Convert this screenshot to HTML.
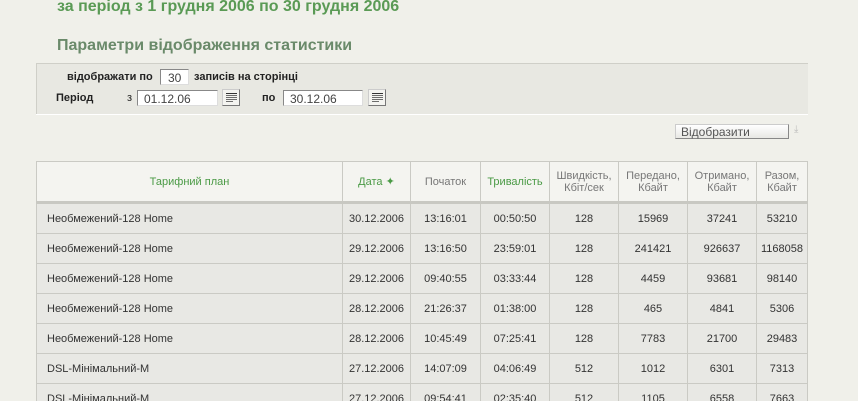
<!DOCTYPE html>
<html><head><meta charset="utf-8"><style>
html,body{margin:0;width:858px;height:401px;overflow:hidden}
body{background:#f0f0ea;font-family:"Liberation Sans",sans-serif;position:relative}
.t1{position:absolute;left:57px;top:-2px;font-size:16px;font-weight:bold;color:#5a9a55}
.t2{position:absolute;left:57px;top:37px;font-size:16px;font-weight:bold;color:#6a8a6a}
.panel{position:absolute;left:36px;top:63px;width:771px;height:50px;background:#e8e8e2;border-top:1px solid #cfcfc8;border-left:1px solid #cfcfc8;box-shadow:0 1px 0 #fff}
.lbl{position:absolute;font-size:11px;font-weight:bold;color:#222}
.inp{position:absolute;height:16px;background:#fff;border:1px solid #888;border-right-color:#ddd;border-bottom-color:#ddd;font-size:12px;color:#444;line-height:16px;padding-left:6px;box-sizing:border-box}
.cal{position:absolute;width:18px;height:17px;background:#f4f4f0;border:1px solid #ccc;border-right-color:#777;border-bottom-color:#777;box-sizing:border-box}
.cal svg{position:absolute;left:3px;top:3px}
.btn{position:absolute;left:675px;top:124px;width:114px;height:15px;background:linear-gradient(#fff,#e8e8e4);border:1px solid #ccc;border-right-color:#888;border-bottom-color:#888;font-size:12px;color:#555;line-height:14px;padding-left:5px;box-sizing:border-box}
table{position:absolute;left:36px;top:161px;border-collapse:collapse;table-layout:fixed;font-size:11px;color:#333}
td,th{border:1px solid #cacac4;padding:0;text-align:center}
th{height:39px;background:#f4f4f0;font-weight:normal;color:#777}
th.g{color:#4a9a45}
tr.h th{border-bottom:3px solid #c8c8c2}
td{height:29px;background:#e8e8e4}
td.l{text-align:left;padding-left:10px}
</style></head><body>
<div class="t1">за період з 1 грудня 2006 по 30 грудня 2006</div>
<div class="t2">Параметри відображення статистики</div>
<div class="panel">
<div class="lbl" style="left:30px;top:7px">відображати по</div>
<div class="inp" style="left:123px;top:5px;width:29px;padding-left:7px">30</div>
<div class="lbl" style="left:157px;top:7px">записів на сторінці</div>
<div class="lbl" style="left:19px;top:28px">Період</div>
<div class="lbl" style="left:90px;top:28px;font-weight:normal">з</div>
<div class="inp" style="left:100px;top:26px;width:81px">01.12.06</div>
<div class="cal" style="left:185px;top:25px"><svg width="11" height="10"><g fill="#333"><rect x="0" y="0" width="11" height="1"/><rect x="0" y="2" width="11" height="1" opacity=".7"/><rect x="0" y="4" width="11" height="1" opacity=".7"/><rect x="0" y="6" width="11" height="1" opacity=".7"/><rect x="0" y="8" width="7" height="1" opacity=".7"/></g></svg></div>
<div class="lbl" style="left:225px;top:28px">по</div>
<div class="inp" style="left:246px;top:26px;width:80px">30.12.06</div>
<div class="cal" style="left:331px;top:25px"><svg width="11" height="10"><g fill="#333"><rect x="0" y="0" width="11" height="1"/><rect x="0" y="2" width="11" height="1" opacity=".7"/><rect x="0" y="4" width="11" height="1" opacity=".7"/><rect x="0" y="6" width="11" height="1" opacity=".7"/><rect x="0" y="8" width="7" height="1" opacity=".7"/></g></svg></div>
</div>
<div class="btn">Відобразити</div>
<div style="position:absolute;left:794px;top:124px;font-size:10px;color:#bbb">⤓</div>
<table>
<colgroup><col style="width:306px"><col style="width:68px"><col style="width:70px"><col style="width:69px"><col style="width:69px"><col style="width:69px"><col style="width:69px"><col style="width:51px"></colgroup>
<tr class="h"><th class="g">Тарифний план</th><th class="g">Дата ✦</th><th>Початок</th><th class="g">Тривалість</th><th>Швидкість,<br>Кбіт/сек</th><th>Передано,<br>Кбайт</th><th>Отримано,<br>Кбайт</th><th>Разом,<br>Кбайт</th></tr>
<tr><td class="l">Необмежений-128 Home</td><td>30.12.2006</td><td>13:16:01</td><td>00:50:50</td><td>128</td><td>15969</td><td>37241</td><td>53210</td></tr>
<tr><td class="l">Необмежений-128 Home</td><td>29.12.2006</td><td>13:16:50</td><td>23:59:01</td><td>128</td><td>241421</td><td>926637</td><td>1168058</td></tr>
<tr><td class="l">Необмежений-128 Home</td><td>29.12.2006</td><td>09:40:55</td><td>03:33:44</td><td>128</td><td>4459</td><td>93681</td><td>98140</td></tr>
<tr><td class="l">Необмежений-128 Home</td><td>28.12.2006</td><td>21:26:37</td><td>01:38:00</td><td>128</td><td>465</td><td>4841</td><td>5306</td></tr>
<tr><td class="l">Необмежений-128 Home</td><td>28.12.2006</td><td>10:45:49</td><td>07:25:41</td><td>128</td><td>7783</td><td>21700</td><td>29483</td></tr>
<tr><td class="l">DSL-Мінімальний-М</td><td>27.12.2006</td><td>14:07:09</td><td>04:06:49</td><td>512</td><td>1012</td><td>6301</td><td>7313</td></tr>
<tr><td class="l">DSL-Мінімальний-М</td><td>27.12.2006</td><td>09:54:41</td><td>02:35:40</td><td>512</td><td>1105</td><td>6558</td><td>7663</td></tr>
</table>
</body></html>
